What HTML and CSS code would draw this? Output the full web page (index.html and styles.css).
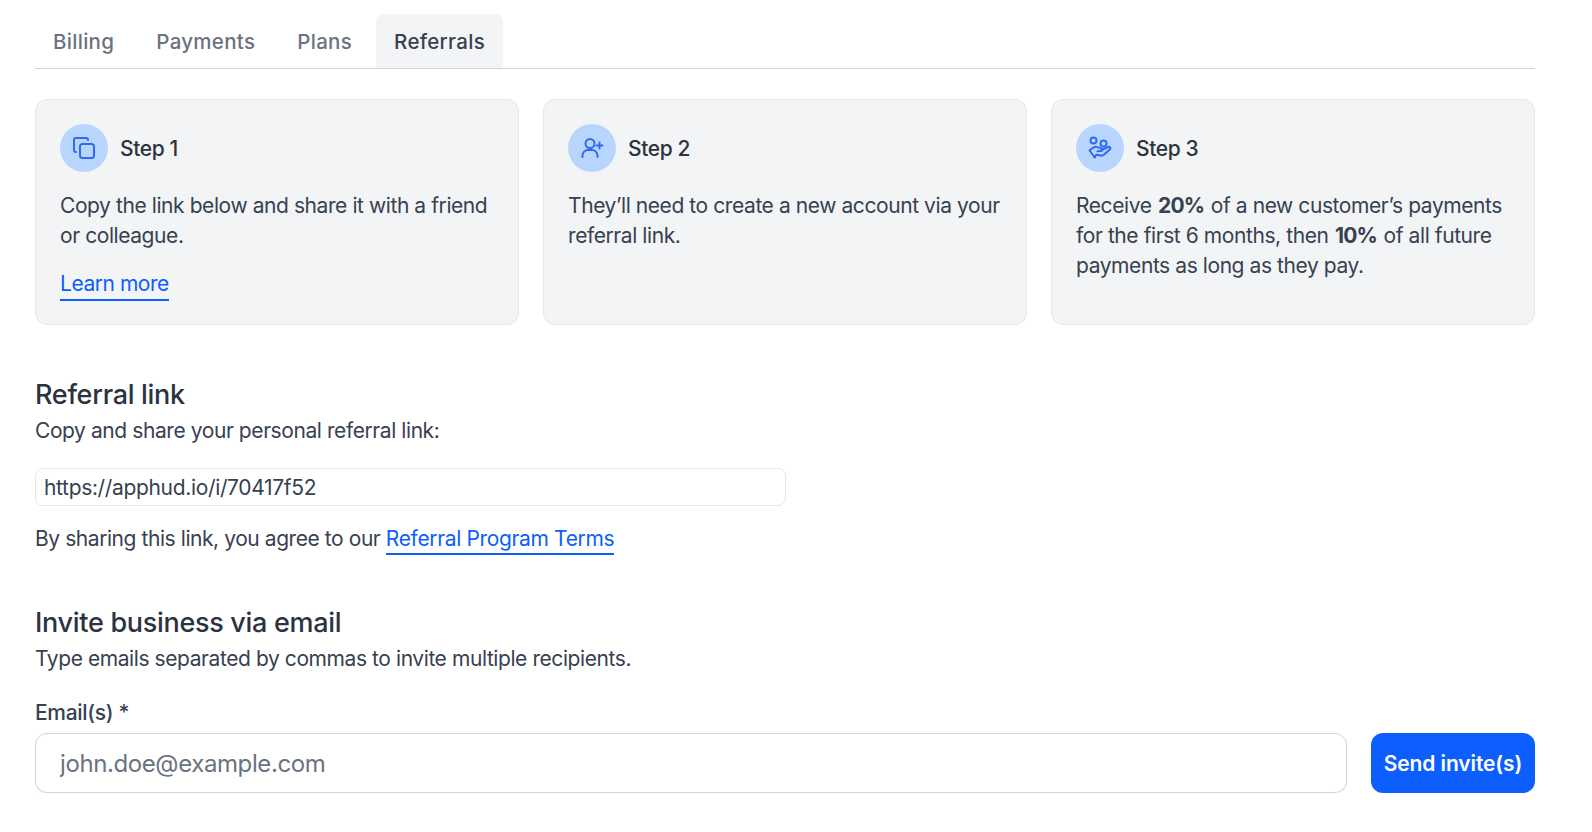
FILE: index.html
```html
<!DOCTYPE html>
<html lang="en">
<head>
<meta charset="utf-8">
<title>Referrals</title>
<link rel="stylesheet" href="styles.css">
</head>
<body>
<main class="page">
  <nav class="tabs">
    <a class="tab">Billing</a>
    <a class="tab">Payments</a>
    <a class="tab">Plans</a>
    <a class="tab tab-active">Referrals</a>
  </nav>
  <section class="cards">
    <article class="card">
      <div class="card-head">
        <span class="badge"><svg class="icon" viewBox="0 0 24 24"><rect x="8" y="8" width="14" height="14" rx="2.5"/><path d="M4 16c-1.1 0-2-.9-2-2V4c0-1.100.9-2 2-2h10c1.100 0 2 .9 2 2"/></svg></span>
        <h3 class="step">Step 1</h3>
      </div>
      <p class="card-text">Copy the link below and share it with a friend or colleague.</p>
      <a class="link card-link">Learn more</a>
    </article>
    <article class="card">
      <div class="card-head">
        <span class="badge"><svg class="icon" viewBox="0 0 24 24"><circle cx="10" cy="7.500" r="4.500"/><path d="M2.500 21v-1.500a5.500 5.500 0 0 1 5.500-5.500h4a5.500 5.500 0 0 1 5.500 5.500V21"/><path d="M19.500 6.500v6M16.500 9.500h6"/></svg></span>
        <h3 class="step">Step 2</h3>
      </div>
      <p class="card-text">They’ll need to create a new account via your referral link.</p>
    </article>
    <article class="card">
      <div class="card-head">
        <span class="badge"><svg class="icon" viewBox="0 0 24 24"><circle cx="5.500" cy="4.500" r="3"/><circle cx="15.500" cy="7.500" r="3"/><path d="M2 14l3.500-2.500c1-.7 2-.9 3-.6l5 1.500c1.300.4 1.200 2.400-.5 2.600l-3.500.3"/><path d="M13.500 14l6.800-3c1.700-.6 2.800 1.300 1.500 2.500l-6 5.300c-1 .8-2 1-3 .8l-4.300-.9-2.500 2.300"/><path d="M1.500 14.500l5.500 7"/></svg></span>
        <h3 class="step">Step 3</h3>
      </div>
      <p class="card-text">Receive <b class="num">20%</b> of a new customer’s payments for the first 6 months, then <b class="num">10%</b> of all future payments as long as they pay.</p>
    </article>
  </section>
  <section class="block block-link">
    <h2 class="title">Referral link</h2>
    <p class="sub">Copy and share your personal referral link:</p>
    <div class="url">https://apphud.io/i/70417f52</div>
    <p class="terms">By sharing this link, you agree to our <a class="link">Referral Program Terms</a></p>
  </section>
  <section class="block block-invite">
    <h2 class="title">Invite business via email</h2>
    <p class="sub">Type emails separated by commas to invite multiple recipients.</p>
    <label class="label" for="emails">Email(s) *</label>
    <div class="invite-row">
      <input class="input" id="emails" placeholder="john.doe@example.com">
      <button class="send">Send invite(s)</button>
    </div>
  </section>
</main>
</body>
</html>
```
FILE: styles.css
```css
* { box-sizing: border-box; }
html, body { margin: 0; background: #fff; }
body { font-family: Inter, "Noto Sans", sans-serif; color: #374151; font-size: 21px; }
.page { padding: 14px 57px 0 35px; }
.tabs { display: flex; gap: 6px; height: 55px; border-bottom: 1px solid #d1d5db; }
.tab { padding: 2px 18px 0; height: 54px; line-height: 52px; font-size: 20.5px; font-weight: 500; color: #6b7280; border-radius: 8px 8px 0 0; letter-spacing: 0.3px; }
.tab-active { background: #f3f4f6; color: #374151; }
.cards { display: grid; grid-template-columns: repeat(3, 1fr); gap: 24px; margin-top: 30px; }
.card { height: 226px; background: #f3f4f6; border: 1px solid #e5e7eb; border-radius: 12px; padding: 24px; }
.card-head { display: flex; align-items: center; gap: 12px; }
.badge { width: 48px; height: 48px; border-radius: 50%; background: #b8d6fd; display: flex; align-items: center; justify-content: center; }
.icon { width: 24px; height: 24px; fill: none; stroke: #2f6bf0; stroke-width: 2; stroke-linecap: round; stroke-linejoin: round; }
.step { margin: 0; font-size: 21px; font-weight: 500; color: #2b3340; letter-spacing: -0.4px; }
.card-text { margin: 19px 0 0; font-size: 21px; line-height: 30px; letter-spacing: -0.42px; color: #374151; }
.num { display: inline-block; font-weight: 700; letter-spacing: -0.8px; margin: 0 1px; }
.link { color: #0d5eff; border-bottom: 2px solid #0d5eff; display: inline-block; line-height: 26px; padding-bottom: 2px; }
.card-link { margin-top: 20px; font-size: 21px; letter-spacing: -0.46px; }
.block-link { margin-top: 52px; }
.block-invite { margin-top: 51px; }
.title { margin: 0; font-size: 27px; line-height: 36px; font-weight: 500; color: #2b3340; letter-spacing: -0.3px; }
.sub { margin: 3px 0 0; font-size: 21px; line-height: 30px; letter-spacing: -0.42px; color: #374151; }
.url { margin-top: 22px; width: 751px; height: 38px; border: 1px solid #e5e7eb; border-radius: 8px; padding: 0 8px; line-height: 37px; font-size: 21px; letter-spacing: -0.34px; color: #374151; }
.terms { margin: 18px 0 0; height: 30px; font-size: 21px; line-height: 30px; letter-spacing: -0.43px; color: #374151; }
.terms .link { line-height: 25px; letter-spacing: -0.35px; }
.label { display: block; margin-top: 25px; font-size: 21px; line-height: 28px; font-weight: 500; color: #374151; letter-spacing: -0.3px; }
.invite-row { display: flex; gap: 24px; margin-top: 6px; }
.input { flex: 1; height: 60px; border: 1px solid #d1d5db; border-radius: 12px; padding: 0 24px; font: 400 24px Inter, sans-serif; letter-spacing: -0.4px; box-shadow: 0 1px 2px rgba(0,0,0,.05); outline: 0; }
.input::placeholder { color: #6b7280; opacity: 1; }
.send { width: 164px; height: 60px; background: #0d5eff; color: #fff; border: 0; border-radius: 12px; font: 600 21px Inter, sans-serif; letter-spacing: -0.1px; padding: 0; }
```
